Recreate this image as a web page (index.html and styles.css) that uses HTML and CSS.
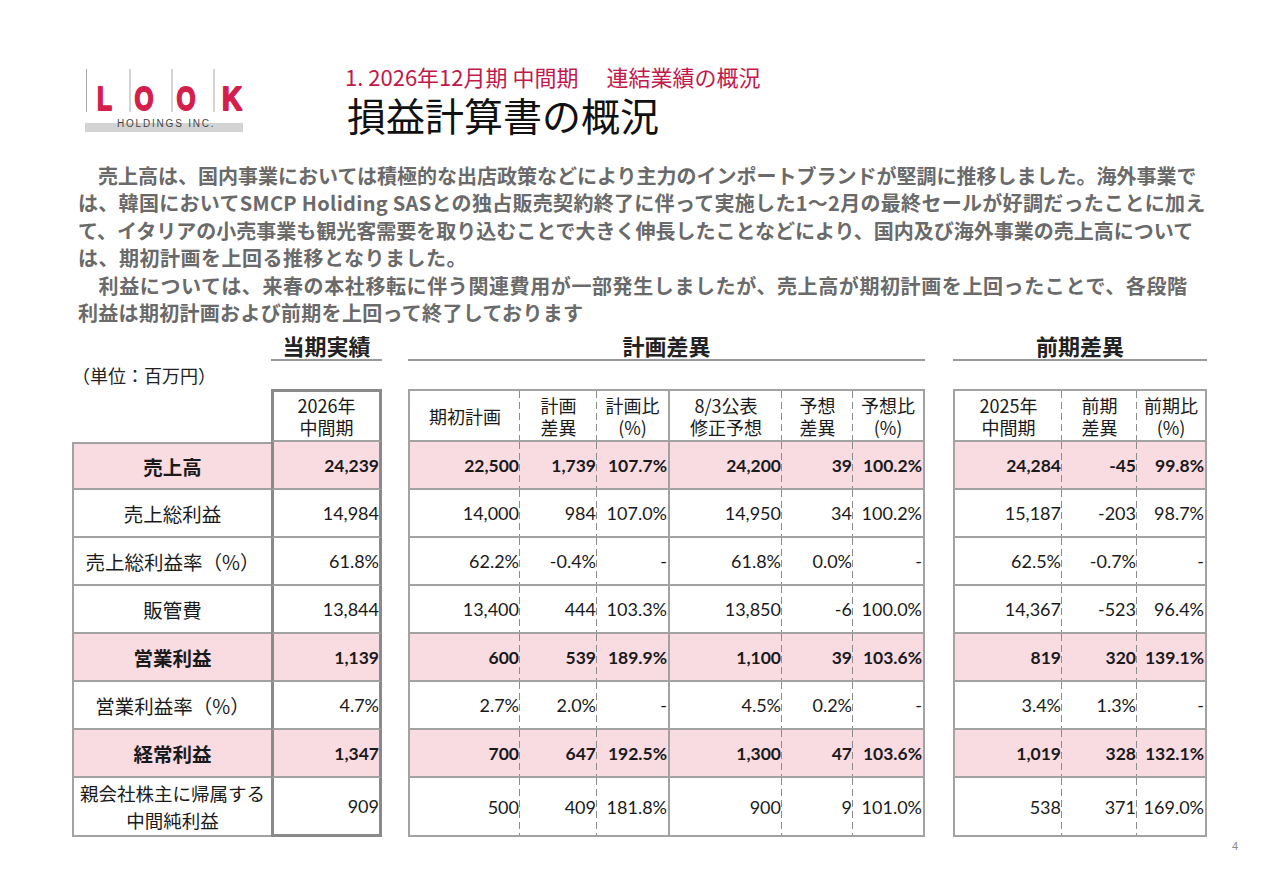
FILE: index.html
```html
<!DOCTYPE html>
<html lang="ja">
<head>
<meta charset="utf-8">
<title>損益計算書の概況</title>
<link rel="stylesheet" href="styles.css">
</head>
<body>
<div class="page">
  <header class="top">
    <svg class="logo" width="164" height="66" viewBox="0 0 164 66">
      <g stroke="#a8a8a8" stroke-width="1">
        <line x1="1.5" y1="1" x2="1.5" y2="44"/>
        <line x1="45" y1="1" x2="45" y2="44"/>
        <line x1="87" y1="1" x2="87" y2="44"/>
        <line x1="129" y1="1" x2="129" y2="44"/>
      </g>
      <g class="logo-letters">
        <text x="12" y="42" textLength="15" lengthAdjust="spacingAndGlyphs">L</text>
        <text x="49.5" y="42" textLength="19" lengthAdjust="spacingAndGlyphs">O</text>
        <text x="91.5" y="42" textLength="19" lengthAdjust="spacingAndGlyphs">O</text>
        <text x="137" y="42" textLength="20" lengthAdjust="spacingAndGlyphs">K</text>
      </g>
      <rect x="0" y="55" width="158" height="9" fill="#d3d3d3"/>
      <text class="logo-sub" x="32" y="58.5">HOLDINGS INC.</text>
    </svg>
    <div class="titles">
      <div class="subtitle">1. 2026年12月期 中間期<span class="sp"></span>連結業績の概況</div>
      <h1 class="title">損益計算書の概況</h1>
    </div>
  </header>

  <p class="lead">
    <span>　売上高は、国内事業においては積極的な出店政策などにより主力のインポートブランドが堅調に推移しました。海外事業で</span>
    <span class="ls3">は、韓国においてSMCP Holiding SASとの独占販売契約終了に伴って実施した1～2月の最終セールが好調だったことに加え</span>
    <span>て、イタリアの小売事業も観光客需要を取り込むことで大きく伸長したことなどにより、国内及び海外事業の売上高について</span>
    <span class="ls5">は、期初計画を上回る推移となりました。</span>
    <span class="ls6">　利益については、来春の本社移転に伴う関連費用が一部発生しましたが、売上高が期初計画を上回ったことで、各段階</span>
    <span class="ls3">利益は期初計画および前期を上回って終了しております</span>
  </p>

  <div class="grid">
    <!-- section headings -->
    <div></div>
    <div class="sec">当期実績</div>
    <div></div>
    <div class="sec s6">計画差異</div>
    <div></div>
    <div class="sec s3">前期差異</div>

    <!-- unit -->
    <div class="unit">（単位：百万円）</div>
    <div class="s12"></div>

    <!-- header row -->
    <div></div>
    <div class="cur hd">2026年<br>中間期</div>
    <div></div>
    <div class="g hd first dr">期初計画</div>
    <div class="g hd dr">計画<br>差異</div>
    <div class="g hd sr">計画比<br>(%)</div>
    <div class="g hd dr">8/3公表<br>修正予想</div>
    <div class="g hd dr">予想<br>差異</div>
    <div class="g hd sr">予想比<br>(%)</div>
    <div></div>
    <div class="g hd first dr">2025年<br>中間期</div>
    <div class="g hd dr">前期<br>差異</div>
    <div class="g hd sr">前期比<br>(%)</div>

    <!-- 売上高 -->
    <div class="lb pk lb-top">売上高</div>
    <div class="cur pk num">24,239</div>
    <div></div>
    <div class="g pk num first dr">22,500</div>
    <div class="g pk num dr">1,739</div>
    <div class="g pk num sr">107.7%</div>
    <div class="g pk num dr">24,200</div>
    <div class="g pk num dr">39</div>
    <div class="g pk num sr">100.2%</div>
    <div></div>
    <div class="g pk num first dr">24,284</div>
    <div class="g pk num dr">-45</div>
    <div class="g pk num sr">99.8%</div>

    <!-- 売上総利益 -->
    <div class="lb">売上総利益</div>
    <div class="cur num">14,984</div>
    <div></div>
    <div class="g num first dr">14,000</div>
    <div class="g num dr">984</div>
    <div class="g num sr">107.0%</div>
    <div class="g num dr">14,950</div>
    <div class="g num dr">34</div>
    <div class="g num sr">100.2%</div>
    <div></div>
    <div class="g num first dr">15,187</div>
    <div class="g num dr">-203</div>
    <div class="g num sr">98.7%</div>

    <!-- 売上総利益率 -->
    <div class="lb">売上総利益率（%）</div>
    <div class="cur num">61.8%</div>
    <div></div>
    <div class="g num first dr">62.2%</div>
    <div class="g num dr">-0.4%</div>
    <div class="g num sr">-</div>
    <div class="g num dr">61.8%</div>
    <div class="g num dr">0.0%</div>
    <div class="g num sr">-</div>
    <div></div>
    <div class="g num first dr">62.5%</div>
    <div class="g num dr">-0.7%</div>
    <div class="g num sr">-</div>

    <!-- 販管費 -->
    <div class="lb">販管費</div>
    <div class="cur num">13,844</div>
    <div></div>
    <div class="g num first dr">13,400</div>
    <div class="g num dr">444</div>
    <div class="g num sr">103.3%</div>
    <div class="g num dr">13,850</div>
    <div class="g num dr">-6</div>
    <div class="g num sr">100.0%</div>
    <div></div>
    <div class="g num first dr">14,367</div>
    <div class="g num dr">-523</div>
    <div class="g num sr">96.4%</div>

    <!-- 営業利益 -->
    <div class="lb pk">営業利益</div>
    <div class="cur pk num">1,139</div>
    <div></div>
    <div class="g pk num first dr">600</div>
    <div class="g pk num dr">539</div>
    <div class="g pk num sr">189.9%</div>
    <div class="g pk num dr">1,100</div>
    <div class="g pk num dr">39</div>
    <div class="g pk num sr">103.6%</div>
    <div></div>
    <div class="g pk num first dr">819</div>
    <div class="g pk num dr">320</div>
    <div class="g pk num sr">139.1%</div>

    <!-- 営業利益率 -->
    <div class="lb">営業利益率（%）</div>
    <div class="cur num">4.7%</div>
    <div></div>
    <div class="g num first dr">2.7%</div>
    <div class="g num dr">2.0%</div>
    <div class="g num sr">-</div>
    <div class="g num dr">4.5%</div>
    <div class="g num dr">0.2%</div>
    <div class="g num sr">-</div>
    <div></div>
    <div class="g num first dr">3.4%</div>
    <div class="g num dr">1.3%</div>
    <div class="g num sr">-</div>

    <!-- 経常利益 -->
    <div class="lb pk">経常利益</div>
    <div class="cur pk num">1,347</div>
    <div></div>
    <div class="g pk num first dr">700</div>
    <div class="g pk num dr">647</div>
    <div class="g pk num sr">192.5%</div>
    <div class="g pk num dr">1,300</div>
    <div class="g pk num dr">47</div>
    <div class="g pk num sr">103.6%</div>
    <div></div>
    <div class="g pk num first dr">1,019</div>
    <div class="g pk num dr">328</div>
    <div class="g pk num sr">132.1%</div>

    <!-- 中間純利益 -->
    <div class="lb two">親会社株主に帰属する<br>中間純利益</div>
    <div class="cur num end">909</div>
    <div></div>
    <div class="g num first dr">500</div>
    <div class="g num dr">409</div>
    <div class="g num sr">181.8%</div>
    <div class="g num dr">900</div>
    <div class="g num dr">9</div>
    <div class="g num sr">101.0%</div>
    <div></div>
    <div class="g num first dr">538</div>
    <div class="g num dr">371</div>
    <div class="g num sr">169.0%</div>
  </div>

  <footer class="pageno">4</footer>
</div>
</body>
</html>
```

FILE: styles.css
```css
* { box-sizing: border-box; }

html, body {
  margin: 0;
  padding: 0;
  background: #ffffff;
}

body {
  font-family: "Noto Sans CJK JP", "Noto Sans", sans-serif;
  color: #111;
}

.page {
  width: 1280px;
  height: 886px;
  overflow: hidden;
  position: relative;
}

/* ---------- header ---------- */
.top {
  display: flex;
  align-items: flex-start;
  height: 158px;
  padding: 68px 0 0 85px;
}

.logo {
  display: block;
  flex: none;
}

.logo-letters {
  fill: #d41f4c;
  stroke: #d41f4c;
  stroke-width: 2px;
  stroke-linejoin: round;
  font-family: "Liberation Sans", Arial, sans-serif;
  font-weight: 700;
  font-size: 34px;
}

.logo-sub {
  font-family: "Liberation Sans", Arial, sans-serif;
  font-size: 10px;
  letter-spacing: 1.8px;
  fill: #444;
}

.titles {
  margin-left: 96px;
  margin-top: -4px;
}

.subtitle {
  font-size: 22px;
  line-height: 24px;
  color: #c2184b;
  white-space: nowrap;
}

.subtitle .sp {
  display: inline-block;
  width: 28px;
}

.title {
  margin: 4px 0 0 2px;
  font-size: 39px;
  line-height: 44px;
  font-weight: 400;
  color: #111;
  white-space: nowrap;
}

/* ---------- lead paragraph ---------- */
.lead {
  margin: 4px 0 0 0;
  padding-left: 78px;
  font-size: 20px;
  line-height: 27.4px;
  font-weight: 700;
  color: #6a6a6a;
}

.lead span {
  display: block;
  white-space: nowrap;
}

.lead .ls3 { letter-spacing: 0.3px; }
.lead .ls5 { letter-spacing: 0.5px; }
.lead .ls6 { letter-spacing: 0.6px; }

/* ---------- table grid ---------- */
.grid {
  margin: 6px 0 0 72px;
  display: grid;
  grid-template-columns: 199px 111px 26px 112px 77px 73px 112px 71px 72px 28px 109px 75px 70px;
  grid-template-rows: 29px 28px 53px repeat(7, 48px) 59px;
}

.sec {
  display: flex;
  align-items: flex-end;
  justify-content: center;
  border-bottom: 2px solid #9a9a9a;
  font-size: 22px;
  line-height: 27px;
  font-weight: 700;
  color: #222;
}

.s6 { grid-column: span 6; }
.s3 { grid-column: span 3; }
.s12 { grid-column: span 12; }

.unit {
  display: flex;
  align-items: center;
  font-size: 18px;
  color: #222;
  white-space: nowrap;
}

/* generic group cell */
.g {
  display: flex;
  align-items: center;
  border-bottom: 2px solid #a2a2a2;
}

.first { border-left: 2px solid #a2a2a2; }
.sr { border-right: 2px solid #a2a2a2; }

.dr {
  background-image: linear-gradient(to bottom, #8c8c8c 7px, transparent 7px);
  background-size: 1px 11px;
  background-position: right top;
  background-repeat: repeat-y;
}

.hd {
  justify-content: center;
  text-align: center;
  border-top: 2px solid #a2a2a2;
  font-size: 18px;
  line-height: 22px;
  color: #1a1a1a;
  white-space: nowrap;
}

/* current-period column */
.cur {
  display: flex;
  align-items: center;
  border-left: 3px solid #8a8a8a;
  border-right: 3px solid #8a8a8a;
  border-bottom: 2px solid #a2a2a2;
}

.cur.hd { border-top: 3px solid #8a8a8a; }
.cur.end { border-bottom: 3px solid #8a8a8a; }

/* label column */
.lb {
  display: flex;
  align-items: center;
  justify-content: center;
  text-align: center;
  border-left: 2px solid #a2a2a2;
  border-bottom: 2px solid #a2a2a2;
  font-size: 19.5px;
  line-height: 27px;
  color: #1a1a1a;
  white-space: nowrap;
}

.lb-top { border-top: 2px solid #a2a2a2; }

.lb.two { font-size: 18.5px; }

/* numbers */
.num {
  justify-content: flex-end;
  padding-right: 1px;
  font-family: "Lato", "Liberation Sans", sans-serif;
  font-size: 18px;
  color: #1a1a1a;
}

.cur.num { padding-right: 0; }

/* highlighted rows */
.pk {
  background-color: #f9dbe2;
  font-weight: 700;
}

.pk.num { font-size: 17.5px; }

/* footer */
.pageno {
  position: absolute;
  right: 42px;
  top: 840px;
  font-family: "Liberation Sans", sans-serif;
  font-size: 11px;
  color: #888;
}
```
